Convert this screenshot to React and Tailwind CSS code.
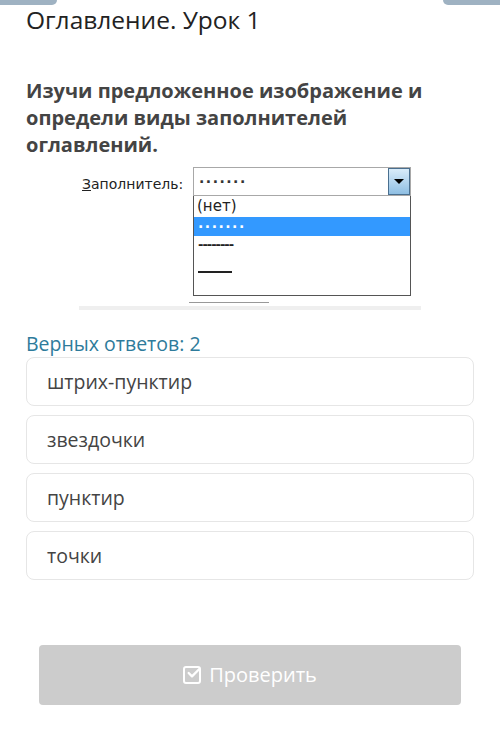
import { Check } from "lucide-react";

const answers = ["штрих-пунктир", "звездочки", "пунктир", "точки"];

const FillerPicture = () => {
  return (
    <div className="mx-[79px] mt-[9px] h-[143px] relative bg-white" style={{ fontFamily: "Tahoma, 'DejaVu Sans', sans-serif" }}>
      <div className="flex items-start">
        <div className="w-[114px] pt-[7px] pl-[3px] text-[14px] text-[#222]">
          <span className="underline">З</span>аполнитель:
        </div>
        <div className="w-[218px] flex flex-col">
          <div className="h-[29px] border border-[#a8a8a8] flex items-center justify-between pl-[5px]">
            <span className="text-[14px] font-bold tracking-[1.5px] text-[#333] -mt-[6px]">.......</span>
            <div className="h-[27px] w-[22px] border border-[#4a6f8f] bg-gradient-to-b from-[#d9ecfa] to-[#8fbfe3] flex items-center justify-center">
              <div className="w-0 h-0 border-l-[5px] border-r-[5px] border-t-[5px] border-l-transparent border-r-transparent border-t-black" />
            </div>
          </div>
          <div className="h-[100px] border border-[#555] border-t-0 flex flex-col">
            <div className="h-[21px] px-[3px] text-[15px] text-[#222] leading-[21px]">(нет)</div>
            <div className="h-[19px] bg-[#3399ff] px-[4px] flex items-center">
              <span className="text-[14px] font-bold text-white tracking-[1.5px] -mt-[6px]">.......</span>
            </div>
            <div className="h-[20px] px-[4px] flex items-center">
              <span className="text-[13px] font-bold text-[#222] tracking-[-1px] -mt-[2px]">--------</span>
            </div>
            <div className="h-[20px] px-[4px] flex items-end">
              <div className="w-[34px] h-[2px] bg-[#222] mb-[3px]" />
            </div>
          </div>
        </div>
      </div>
      <div className="absolute left-[110px] top-[135px] w-[80px] h-px bg-[#999]" />
      <div className="absolute left-0 right-0 bottom-0 h-[4px] bg-[#efefef]" />
    </div>
  );
};

export default function App() {
  return (
    <div className="w-[500px] h-[734px] bg-white relative overflow-hidden" style={{ fontFamily: "'Open Sans', sans-serif" }}>
      <div className="absolute left-0 top-0 w-[57px] h-[5px] bg-[#9fb2c2] rounded-br-[5px]" />
      <div className="absolute right-0 top-0 w-[57px] h-[5px] bg-[#9fb2c2] rounded-bl-[5px]" />

      <h1 className="pl-[26px] pt-[3px] text-[24.5px] leading-[34px] text-[#222]">Оглавление. Урок 1</h1>

      <p className="px-[26px] mt-[40px] text-[20px] leading-[27px] font-bold text-[#444]">
        Изучи предложенное изображение и определи виды заполнителей оглавлений.
      </p>

      <FillerPicture />

      <div className="px-[26px] mt-[22px]">
        <div className="text-[19.5px] leading-[24px] text-[#2e7b9b]">Верных ответов: 2</div>
        <div className="mt-[1px] flex flex-col gap-[9px]">
          {answers.map((a) => (
            <div key={a} className="h-[49px] border border-[#e6e6e6] rounded-[8px] flex items-center px-[20px] text-[19.5px] text-[#444]">
              {a}
            </div>
          ))}
        </div>
      </div>

      <div className="px-[39px] mt-[65px]">
        <button className="w-full h-[60px] rounded-[4px] bg-[#cccccc] text-white text-[20px] flex items-center justify-center gap-[8px]">
          <span className="relative w-[18px] h-[18px] border-2 border-white rounded-[3px] flex items-center justify-center">
            <Check size={16} strokeWidth={3.5} className="absolute -top-[3px] left-[1px]" />
          </span>
          Проверить
        </button>
      </div>
    </div>
  );
}
